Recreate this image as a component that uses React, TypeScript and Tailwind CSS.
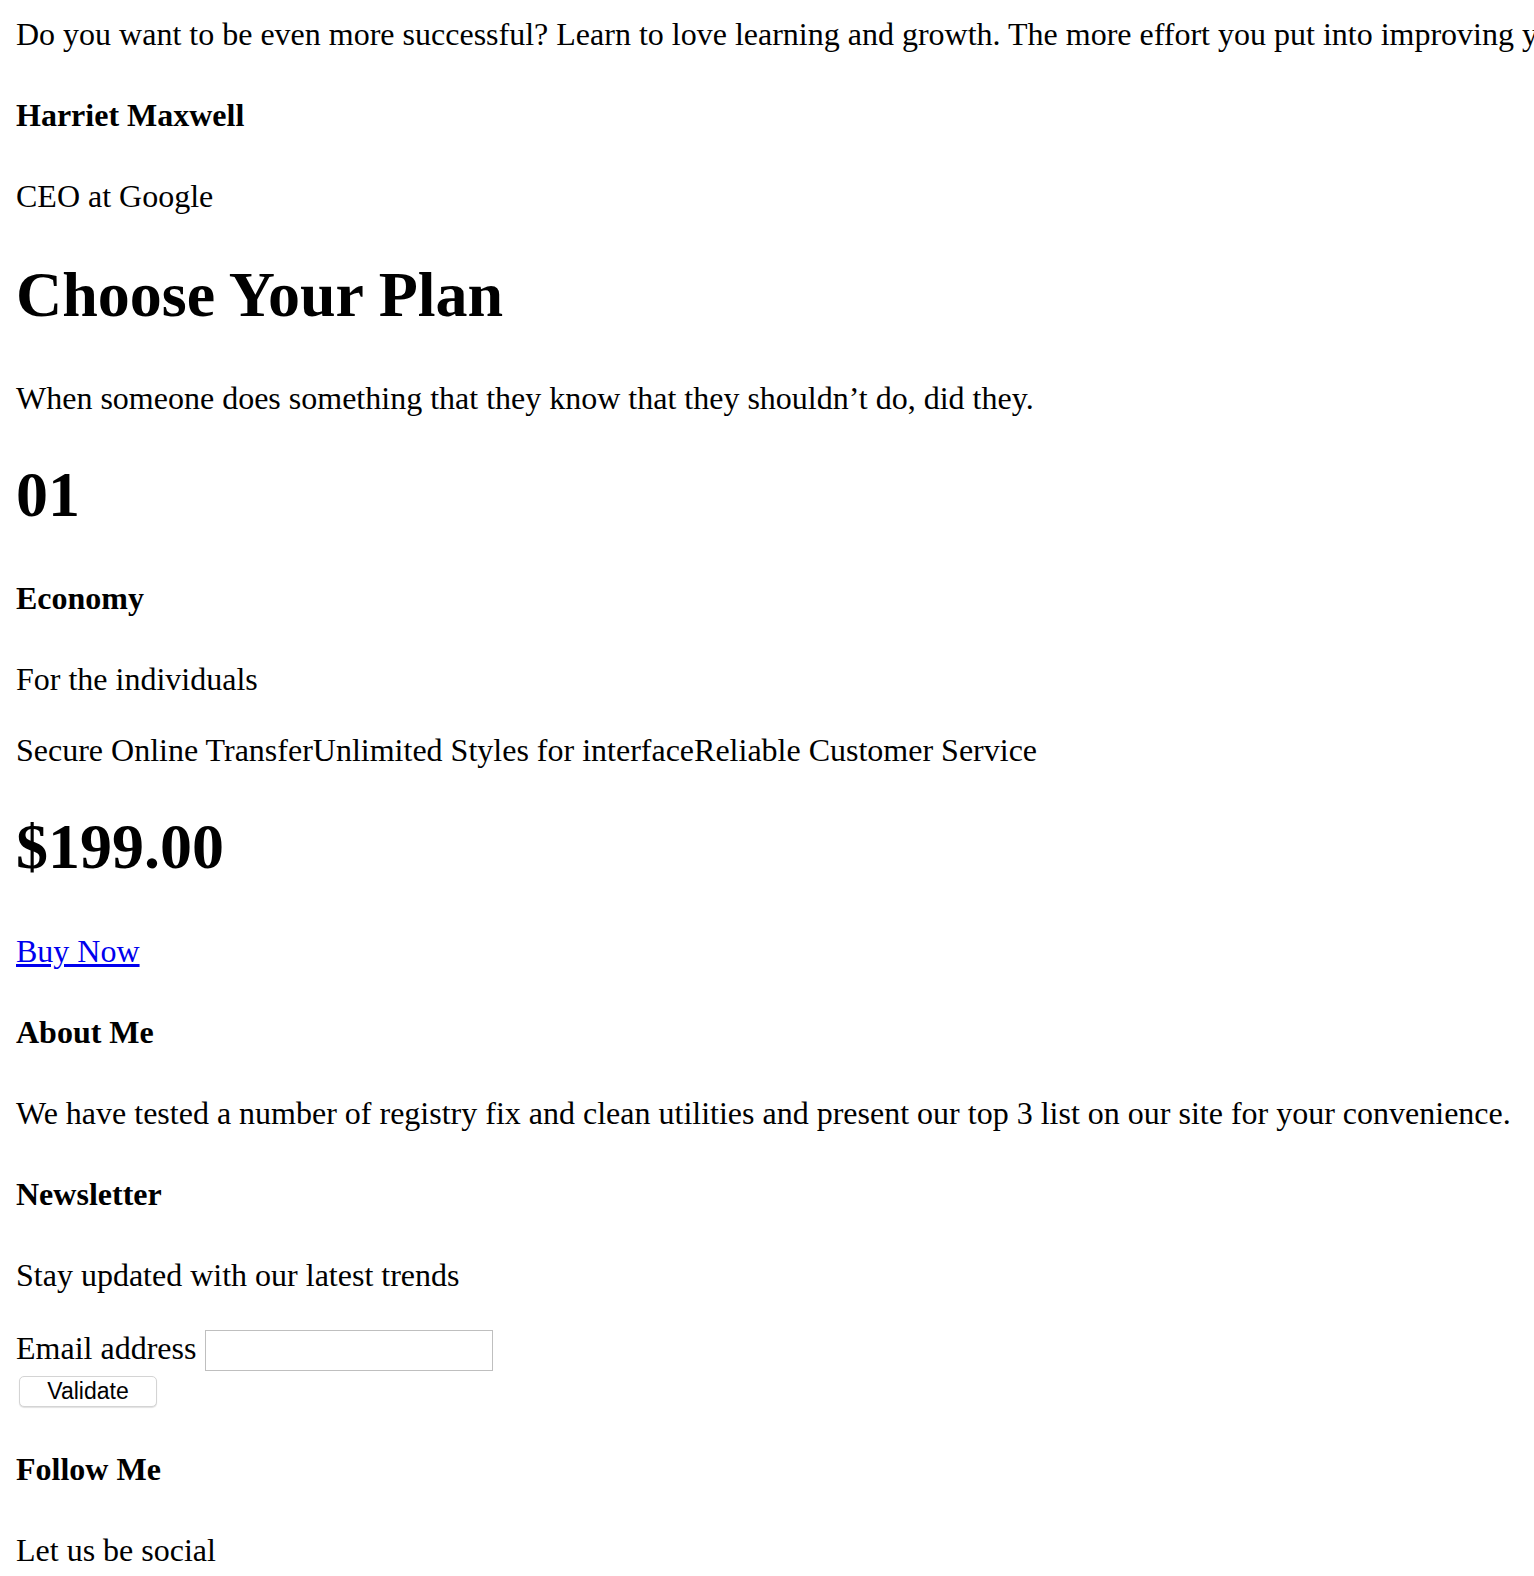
export default function App() {
  return (
    <div className="w-full overflow-hidden bg-white px-4 pt-4 pb-8 font-['Liberation_Serif','Times_New_Roman',serif] text-[32px] leading-[normal] text-black">
      <p className="whitespace-nowrap">
        Do you want to be even more successful? Learn to love learning and growth. The more effort you put into improving your skills, the bigger the payoff you will get.
      </p>
      <h4 className="my-[44px] font-bold">Harriet Maxwell</h4>
      <p className="my-[34px]">CEO at Google</p>

      <h1 className="mt-[43px] mb-[48px] text-[64px] font-bold">Choose Your Plan</h1>
      <p className="my-[34px]">When someone does something that they know that they shouldn’t do, did they.</p>

      <h1 className="mt-[41px] mb-[48px] text-[64px] font-bold">01</h1>
      <h4 className="my-[44px] font-bold">Economy</h4>
      <p className="my-[34px]">For the individuals</p>
      <p className="my-[34px]">
        <span>Secure Online Transfer</span>
        <span>Unlimited Styles for interface</span>
        <span>Reliable Customer Service</span>
      </p>
      <h1 className="mt-[41px] mb-[49px] text-[64px] font-bold">$199.00</h1>
      <p className="my-[34px]">
        <a href="#" className="text-[#0000ee] underline">
          Buy Now
        </a>
      </p>

      <h4 className="my-[44px] font-bold">About Me</h4>
      <p className="my-[34px]">
        We have tested a number of registry fix and clean utilities and present our top 3 list on our site for your convenience.
      </p>

      <h4 className="my-[44px] font-bold">Newsletter</h4>
      <p className="my-[34px]">Stay updated with our latest trends</p>
      <form className="mt-[36px] mb-[34px]" onSubmit={(e) => e.preventDefault()}>
        <div className="flex items-start gap-[9px]">
          <label htmlFor="email">Email address</label>
          <input
            id="email"
            type="email"
            className="h-[41px] w-[288px] border border-[#bfbfbf] bg-white px-2 text-[22px] outline-none"
          />
        </div>
        <button
          type="submit"
          className="mt-[5px] ml-[3px] flex h-[31px] w-[138px] items-center justify-center rounded-[5px] border border-[#d4d4d4] bg-white font-['Liberation_Sans',Arial,sans-serif] text-[23px] text-black shadow-[0_1px_1px_rgba(0,0,0,0.12)]"
        >
          Validate
        </button>
      </form>

      <h4 className="my-[44px] font-bold">Follow Me</h4>
      <p className="my-[34px]">Let us be social</p>
    </div>
  );
}
